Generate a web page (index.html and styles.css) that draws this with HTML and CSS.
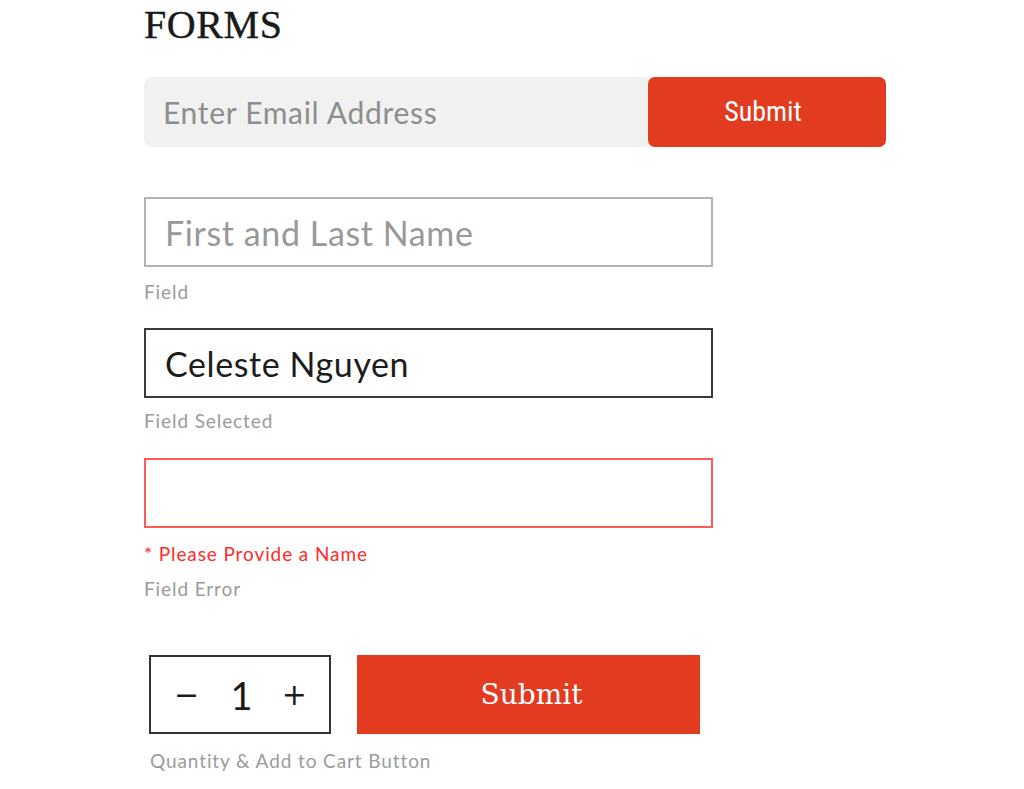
FILE: index.html
```html
<!DOCTYPE html>
<html>
<head>
<meta charset="utf-8">
<link rel="stylesheet" href="styles.css">
</head>
<body>
<main class="page">
  <h1 class="title">FORMS</h1>

  <form class="newsletter">
    <span class="newsletter-input">Enter Email Address</span>
    <span class="newsletter-btn">Submit</span>
  </form>

  <div class="field field-default"><span class="placeholder">First and Last Name</span></div>
  <p class="caption caption-first">Field</p>

  <div class="field field-selected"><span class="value">Celeste Nguyen</span></div>
  <p class="caption caption-selected">Field Selected</p>

  <div class="field field-error"></div>
  <p class="error-msg">* Please Provide a Name</p>
  <p class="caption caption-error">Field Error</p>

  <div class="cart-row">
    <div class="qty">
      <span class="qty-btn">&minus;</span>
      <span class="qty-val">1</span>
      <span class="qty-btn">+</span>
    </div>
    <span class="cart-btn">Submit</span>
  </div>
  <p class="caption caption-cart">Quantity &amp; Add to Cart Button</p>
</main>
</body>
</html>
```

FILE: styles.css
```css
html, body {
  margin: 0;
  padding: 0;
  background: #ffffff;
}

.page {
  padding-left: 144px;
  font-family: Lato, "Liberation Sans", sans-serif;
}

.title {
  margin: 0;
  padding-top: 5px;
  font-family: "Liberation Serif", serif;
  font-weight: 400;
  font-size: 40px;
  line-height: 40px;
  color: #1a1a1a;
  letter-spacing: 0.6px;
  -webkit-text-stroke: 0.4px #1a1a1a;
}

.newsletter {
  margin: 32px 0 0 0;
  width: 742px;
  height: 70px;
  display: flex;
  align-items: stretch;
  background: #f0f1f0;
  border-radius: 7px;
}

.newsletter-input {
  flex: 1;
  display: flex;
  align-items: center;
  padding-left: 19px;
  font-size: 30px;
  letter-spacing: 0.7px;
  color: #8e8e8e;
}

.newsletter-btn {
  box-sizing: border-box;
  width: 238px;
  display: flex;
  align-items: center;
  justify-content: center;
  padding: 0 8px 2px 0;
  background: #e33b1f;
  border-radius: 7px;
  color: #ffffff;
  font-family: "Liberation Sans Narrow", "Roboto Condensed", "Liberation Sans", sans-serif;
  font-stretch: condensed;
  font-size: 28px;
}

.field {
  box-sizing: border-box;
  width: 569px;
  height: 70px;
  display: flex;
  align-items: center;
  padding-left: 19px;
}

.field-default {
  margin-top: 50px;
  border: 2px solid #b3b3b3;
}

.field-selected {
  margin-top: 25px;
  border: 2px solid #3a3a3a;
}

.field-error {
  margin-top: 26px;
  border: 2px solid #ff5a5a;
}

.placeholder {
  font-size: 34px;
  letter-spacing: 0.6px;
  color: #999999;
}

.value {
  font-size: 34px;
  letter-spacing: 0.6px;
  color: #1c1c1c;
}

.caption {
  margin: 14px 0 0 0;
  font-size: 19px;
  line-height: 22px;
  letter-spacing: 0.9px;
  color: #9b9b9b;
}

.caption-selected {
  margin-top: 12px;
}

.error-msg {
  margin: 15px 0 0 0;
  font-size: 19px;
  line-height: 22px;
  letter-spacing: 0.9px;
  color: #ff2b2b;
}

.caption-error {
  margin-top: 13px;
}

.cart-row {
  margin-top: 55px;
  margin-left: 5px;
  display: flex;
  gap: 26px;
}

.qty {
  box-sizing: border-box;
  width: 182px;
  height: 79px;
  border: 2px solid #333333;
  display: flex;
  align-items: center;
  justify-content: space-between;
  padding: 0 22px 0 23px;
  color: #1c1c1c;
}

.qty-btn {
  font-family: "DejaVu Sans", sans-serif;
  font-size: 30px;
}

.qty-val {
  font-family: Lato, sans-serif;
  font-size: 38px;
  font-weight: 400;
  margin-left: 2px;
}

.cart-btn {
  box-sizing: border-box;
  width: 343px;
  height: 79px;
  display: flex;
  align-items: center;
  justify-content: center;
  padding-left: 6px;
  background: #e33b1f;
  color: #ffffff;
  font-family: "DejaVu Serif", serif;
  font-size: 28px;
}

.caption-cart {
  margin-top: 16px;
  margin-left: 6px;
}
```
